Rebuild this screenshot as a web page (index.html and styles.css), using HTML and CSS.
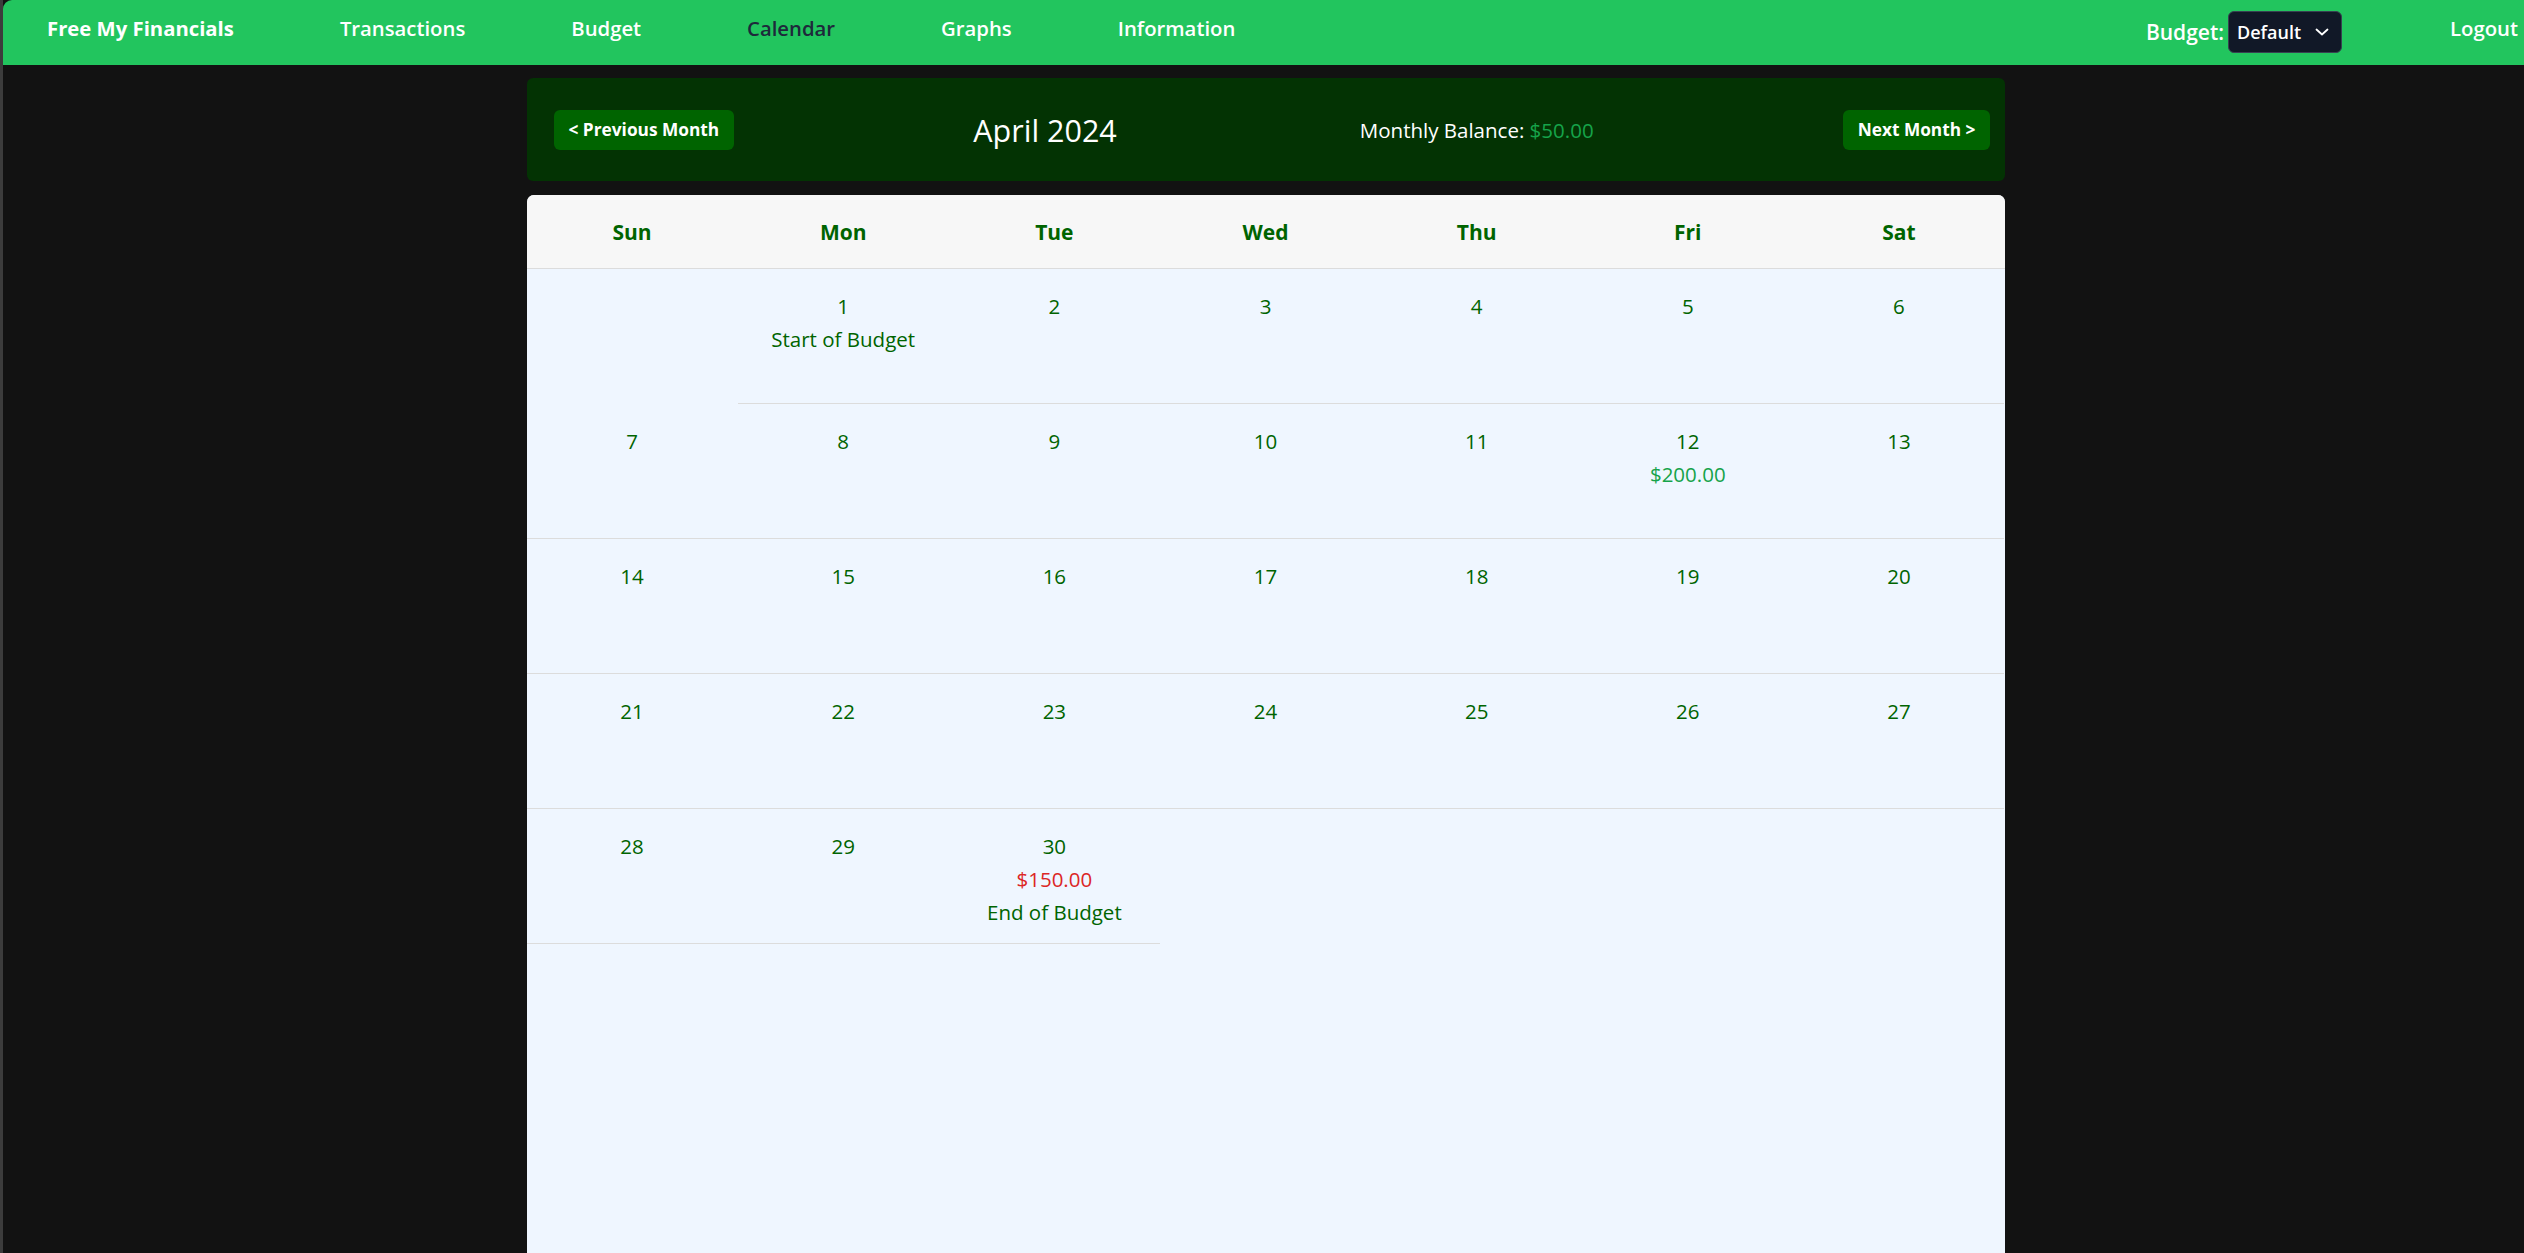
FILE: index.html
```html
<!DOCTYPE html>
<html lang="en">
<head>
<meta charset="utf-8">
<title>Free My Financials - Calendar</title>
<link rel="stylesheet" href="styles.css">
</head>
<body>
<nav class="navbar">
  <div class="nav-left">
    <a class="brand" href="#">Free My Financials</a>
    <a class="nav-link" href="#">Transactions</a>
    <a class="nav-link" href="#">Budget</a>
    <a class="nav-link active" href="#">Calendar</a>
    <a class="nav-link" href="#">Graphs</a>
    <a class="nav-link" href="#">Information</a>
  </div>
  <div class="nav-right">
    <div class="budget-pick">
      <span class="budget-label">Budget:</span>
      <div class="select">
        <span>Default</span>
        <svg class="chev" width="14" height="8" viewBox="0 0 14 8"><polyline points="1.5,1.5 7,6.5 12.5,1.5" fill="none" stroke="#fff" stroke-width="1.8" stroke-linecap="round" stroke-linejoin="round"/></svg>
      </div>
    </div>
    <a class="nav-link logout" href="#">Logout</a>
  </div>
</nav>

<main class="container">
  <div class="month-header">
    <button class="month-btn">&lt; Previous Month</button>
    <h2 class="month-title">April 2024</h2>
    <div class="balance">Monthly Balance: <span class="pos">$50.00</span></div>
    <button class="month-btn">Next Month &gt;</button>
  </div>

  <div class="calendar">
    <div class="cal-head">
      <div>Sun</div><div>Mon</div><div>Tue</div><div>Wed</div><div>Thu</div><div>Fri</div><div>Sat</div>
    </div>
    <div class="cal-body">
      <div class="cell empty"></div>
      <div class="cell"><div>1</div><div>Start of Budget</div></div>
      <div class="cell"><div>2</div></div>
      <div class="cell"><div>3</div></div>
      <div class="cell"><div>4</div></div>
      <div class="cell"><div>5</div></div>
      <div class="cell"><div>6</div></div>

      <div class="cell"><div>7</div></div>
      <div class="cell"><div>8</div></div>
      <div class="cell"><div>9</div></div>
      <div class="cell"><div>10</div></div>
      <div class="cell"><div>11</div></div>
      <div class="cell"><div>12</div><div class="pos">$200.00</div></div>
      <div class="cell"><div>13</div></div>

      <div class="cell"><div>14</div></div>
      <div class="cell"><div>15</div></div>
      <div class="cell"><div>16</div></div>
      <div class="cell"><div>17</div></div>
      <div class="cell"><div>18</div></div>
      <div class="cell"><div>19</div></div>
      <div class="cell"><div>20</div></div>

      <div class="cell"><div>21</div></div>
      <div class="cell"><div>22</div></div>
      <div class="cell"><div>23</div></div>
      <div class="cell"><div>24</div></div>
      <div class="cell"><div>25</div></div>
      <div class="cell"><div>26</div></div>
      <div class="cell"><div>27</div></div>

      <div class="cell"><div>28</div></div>
      <div class="cell"><div>29</div></div>
      <div class="cell"><div>30</div><div class="neg">$150.00</div><div>End of Budget</div></div>
      <div class="cell empty"></div>
      <div class="cell empty"></div>
      <div class="cell empty"></div>
      <div class="cell empty"></div>
    </div>
  </div>
</main>
</body>
</html>
```

FILE: styles.css
```css
html {
  background: #3c3c3c;
}

body {
  margin: 0 0 0 3px;
  background: #121212;
  min-height: 100vh;
  font-family: "Open Sans", "Noto Sans", "DejaVu Sans", sans-serif;
  color: #fff;
}

a {
  text-decoration: none;
  color: inherit;
}

.navbar {
  height: 65px;
  box-sizing: border-box;
  background: #22c55e;
  border-top-left-radius: 9px;
  display: flex;
  justify-content: space-between;
  align-items: flex-start;
  padding: 12px 6px 0 44px;
}

.nav-left {
  display: flex;
  gap: 106px;
  line-height: 32px;
}

.brand {
  font-size: 20.3px;
  font-weight: 700;
  color: #fff;
}

.nav-link {
  font-size: 20.3px;
  font-weight: 600;
  color: #fff;
}

.nav-link.active {
  color: #1e293b;
}

.nav-right {
  display: flex;
  align-items: flex-start;
  gap: 108px;
  line-height: 32px;
}

.budget-pick {
  display: flex;
  align-items: center;
  gap: 4px;
  margin-top: -1px;
}

.budget-label {
  font-size: 21px;
  font-weight: 600;
}

.select {
  height: 42px;
  box-sizing: border-box;
  background: #111827;
  border: 1px solid #374151;
  border-radius: 6px;
  display: flex;
  align-items: center;
  padding: 0 12px 0 8px;
  gap: 14px;
  font-size: 18px;
  font-weight: 600;
  color: #fff;
}

.chev {
  display: block;
}

.container {
  width: 1478px;
  margin: 13px auto 0;
  position: relative;
  left: 2px;
}

.month-header {
  height: 103px;
  box-sizing: border-box;
  background: #033303;
  border-radius: 6px;
  display: flex;
  align-items: center;
  justify-content: space-between;
  padding: 0 14px 0 27px;
  margin-bottom: 14px;
}

.month-btn {
  height: 40px;
  padding: 0 15px;
  border: none;
  border-radius: 6px;
  background: #006400;
  color: #fff;
  font-family: inherit;
  font-size: 17.3px;
  font-weight: 700;
}

.month-title {
  margin: 0 0 0 -4px;
  font-size: 30.5px;
  font-weight: 400;
  color: #fff;
}

.balance {
  margin-right: 6px;
  font-size: 20.5px;
  color: #fff;
}

.pos {
  color: #16a34a;
}

.neg {
  color: #dc2626;
}

.calendar {
  background: #eff6ff;
  border-radius: 7px 7px 0 0;
  overflow: hidden;
  min-height: 1100px;
}

.cal-head {
  display: grid;
  grid-template-columns: repeat(7, 1fr);
  height: 73px;
  background: #f7f7f7;
  border-bottom: 1px solid #dcdcdc;
  align-items: center;
  text-align: center;
  font-size: 21px;
  font-weight: 700;
  color: #006400;
}

.cal-body {
  display: grid;
  grid-template-columns: repeat(7, 1fr);
  grid-auto-rows: 135px;
}

.cell {
  box-sizing: border-box;
  border-bottom: 1px solid #dcdcdc;
  padding-top: 21px;
  text-align: center;
  font-size: 20.5px;
  line-height: 33px;
  color: #006400;
}

.cell.empty {
  border-bottom: none;
}
```
